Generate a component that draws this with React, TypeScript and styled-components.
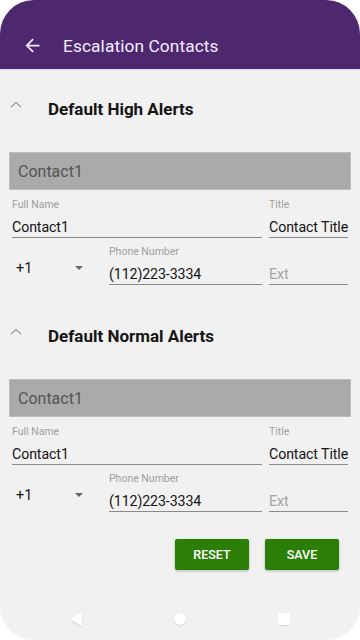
import React from 'react'
import styled, { createGlobalStyle } from 'styled-components'

const GlobalStyle = createGlobalStyle`
  html, body {
    margin: 0;
    padding: 0;
    background: #ffffff;
  }
  body {
    font-family: Roboto, "Noto Sans", Arial, sans-serif;
  }
`

type Contact = {
  name: string
  title: string
  code: string
  phone: string
}

const sections: { heading: string; contact: Contact }[] = [
  {
    heading: 'Default High Alerts',
    contact: { name: 'Contact1', title: 'Contact Title', code: '+1', phone: '(112)223-3334' },
  },
  {
    heading: 'Default Normal Alerts',
    contact: { name: 'Contact1', title: 'Contact Title', code: '+1', phone: '(112)223-3334' },
  },
]

const BackArrow = () => (
  <svg width="21" height="21" viewBox="0 0 24 24" fill="#f4ecff">
    <path d="M20 11H7.83l5.59-5.59L12 4l-8 8 8 8 1.41-1.41L7.83 13H20v-2z" />
  </svg>
)

const ChevronUp = () => (
  <svg width="12" height="7" viewBox="0 0 12 7" fill="none" stroke="#9a9a9a" strokeWidth="1.2">
    <path d="M1 6L6 1.5L11 6" />
  </svg>
)

const ContactBlock = ({ contact }: { contact: Contact }) => (
  <>
    <ContactBar>{contact.name}</ContactBar>
    <NameRow>
      <Field>
        <Label>Full Name</Label>
        <Value>{contact.name}</Value>
      </Field>
      <Field>
        <Label>Title</Label>
        <Value>{contact.title}</Value>
      </Field>
    </NameRow>
    <PhoneRow>
      <CountryCode>
        <span>{contact.code}</span>
        <Caret />
      </CountryCode>
      <Field>
        <Label>Phone Number</Label>
        <Value>{contact.phone}</Value>
      </Field>
      <Field>
        <Label />
        <Value $placeholder>Ext</Value>
      </Field>
    </PhoneRow>
  </>
)

const App = () => {
  return (
    <>
      <GlobalStyle />
      <Screen>
        <Header>
          <BackButton>
            <BackArrow />
          </BackButton>
          <HeaderTitle>Escalation Contacts</HeaderTitle>
        </Header>
        <Content>
          {sections.map((s, i) => (
            <Section key={i} $first={i === 0}>
              <SectionHeader>
                <ChevronWrap>
                  <ChevronUp />
                </ChevronWrap>
                <SectionTitle>{s.heading}</SectionTitle>
              </SectionHeader>
              <ContactBlock contact={s.contact} />
            </Section>
          ))}
          <Actions>
            <ActionButton>RESET</ActionButton>
            <ActionButton>SAVE</ActionButton>
          </Actions>
        </Content>
        <NavBar>
          <NavSlot>
            <NavBack />
          </NavSlot>
          <NavSlot>
            <NavHome />
          </NavSlot>
          <NavSlot>
            <NavRecent />
          </NavSlot>
        </NavBar>
      </Screen>
    </>
  )
}

const Screen = styled.div`
  width: 360px;
  height: 640px;
  background: #f1f1f1;
  border-radius: 34px;
  overflow: hidden;
  display: flex;
  flex-direction: column;
`

const Header = styled.header`
  height: 70px;
  box-sizing: border-box;
  background: #4e286e;
  border-bottom: 1px solid #e4d6f4;
  display: flex;
  align-items: center;
  padding-top: 22px;
`

const BackButton = styled.div`
  width: 21px;
  height: 21px;
  margin-left: 22px;
  display: flex;
`

const HeaderTitle = styled.h1`
  margin: 0 0 0 20px;
  font-size: 17.3px;
  font-weight: 400;
  color: #f4ecff;
  letter-spacing: 0.1px;
`

const Content = styled.main`
  flex: 1;
  display: flex;
  flex-direction: column;
`

const Section = styled.section<{ $first?: boolean }>`
  padding-top: ${({ $first }) => ($first ? '28px' : '40px')};
`

const SectionHeader = styled.div`
  height: 22px;
  display: flex;
  align-items: center;
  margin-bottom: 32px;
`

const ChevronWrap = styled.div`
  width: 12px;
  height: 7px;
  margin: -10px 0 0 10px;
  display: flex;
`

const SectionTitle = styled.h2`
  margin: 0 0 0 26px;
  font-size: 17px;
  font-weight: 700;
  color: #151515;
`

const ContactBar = styled.div`
  margin: 0 9px;
  height: 38px;
  box-sizing: border-box;
  background: #aaaaaa;
  border: 1px solid #bdbdbd;
  padding-left: 8px;
  display: flex;
  align-items: center;
  font-size: 16px;
  color: #555555;
`

const NameRow = styled.div`
  display: grid;
  grid-template-columns: 1fr 79px;
  column-gap: 7px;
  padding: 9px 12px 0;
`

const PhoneRow = styled.div`
  display: grid;
  grid-template-columns: 90px 1fr 79px;
  column-gap: 7px;
  padding: 8px 12px 0;
`

const Field = styled.div`
  display: flex;
  flex-direction: column;
  min-width: 0;
`

const Label = styled.div`
  height: 12px;
  line-height: 12px;
  font-size: 10.5px;
  color: #a0a0a0;
  margin-bottom: 7px;
`

const Value = styled.div<{ $placeholder?: boolean }>`
  height: 19px;
  line-height: 19px;
  font-size: 14.2px;
  letter-spacing: -0.1px;
  color: ${({ $placeholder }) => ($placeholder ? '#a5a5a5' : '#141414')};
  border-bottom: 1px solid #8a8a8a;
  white-space: nowrap;
`

const CountryCode = styled.div`
  display: flex;
  align-items: center;
  justify-content: space-between;
  padding: 6px 19px 0 4px;
  font-size: 14.5px;
  color: #141414;
`

const Caret = styled.span`
  width: 0;
  height: 0;
  border-left: 4px solid transparent;
  border-right: 4px solid transparent;
  border-top: 4px solid #666666;
  margin-top: -2px;
`

const Actions = styled.div`
  display: flex;
  justify-content: flex-end;
  gap: 16px;
  padding: 27px 21px 0 0;
`

const ActionButton = styled.button`
  width: 74px;
  height: 31px;
  border: none;
  border-radius: 2px;
  background: #2b7f06;
  color: #ffffff;
  font-family: Roboto, Arial, sans-serif;
  font-size: 12.5px;
  font-weight: 500;
  box-shadow: 0 1px 3px rgba(0, 0, 0, 0.25);
  padding: 0;
`

const NavBar = styled.nav`
  height: 42px;
  padding: 0 24px;
  display: grid;
  grid-template-columns: repeat(3, 104px);
  align-items: center;
`

const NavSlot = styled.div`
  display: flex;
  justify-content: center;
  align-items: center;
  height: 100%;
`

const NavBack = styled.span`
  width: 0;
  height: 0;
  border-top: 7px solid transparent;
  border-bottom: 7px solid transparent;
  border-right: 12px solid #ffffff;
  filter: drop-shadow(0 1px 1px rgba(0, 0, 0, 0.12));
`

const NavHome = styled.span`
  width: 12px;
  height: 12px;
  border-radius: 50%;
  background: #ffffff;
  box-shadow: 0 1px 1px rgba(0, 0, 0, 0.12);
`

const NavRecent = styled.span`
  width: 12px;
  height: 12px;
  border-radius: 1px;
  background: #ffffff;
  box-shadow: 0 1px 1px rgba(0, 0, 0, 0.12);
`

export default App
